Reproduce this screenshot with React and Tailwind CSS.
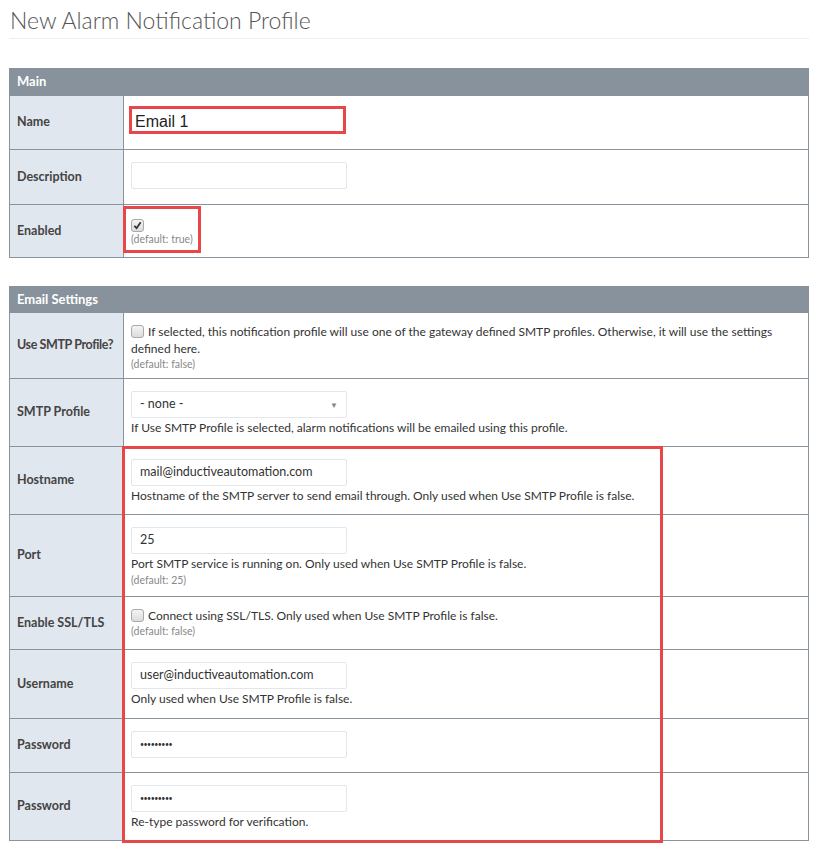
import React from "react";

const font = { fontFamily: "Lato, 'Open Sans', sans-serif" };

const Checkbox = ({ checked }) => (
  <span className="inline-flex items-center justify-center w-[13px] h-[13px] rounded-[3px] border border-[#a9a9a9] bg-gradient-to-b from-[#f4f4f4] to-[#dcdcdc] align-[-2px] mr-[4px]">
    {checked && (
      <svg width="9" height="9" viewBox="0 0 10 10">
        <path d="M1.5 5.5 L4 8 L8.5 1.5" fill="none" stroke="#333" strokeWidth="2" />
      </svg>
    )}
  </span>
);

const Field = ({ children, className = "" }) => (
  <div className={`w-[216px] h-[27px] border border-[#e3e6ea] rounded-[2px] bg-white flex items-center px-[8px] text-[12.5px] text-[#333] ${className}`}>
    {children}
  </div>
);

const Hint = ({ children }) => <div className="text-[12px] text-[#333] leading-[18px] mt-[1px]">{children}</div>;
const Def = ({ children }) => <div className="text-[10.5px] text-[#888] leading-[14px]">{children}</div>;

const Row = ({ label, h, tight, children }) => (
  <tr className={h}>
    <td
      className={`bg-[#e1e7ee] border border-[#8a949e] px-[7px] text-[12.5px] font-bold text-[#444] align-middle whitespace-nowrap ${
        tight ? "tracking-[-0.4px]" : ""
      }`}
    >
      {label}
    </td>
    <td className="border border-[#8a949e] bg-white px-[7px] pt-[12px] pb-[6px] align-top">{children}</td>
  </tr>
);

const Header = ({ title, h }) => (
  <tr className={h}>
    <td colSpan={2} className="bg-[#87929c] border border-[#87929c] px-[7px] text-[13px] font-bold text-white">
      {title}
    </td>
  </tr>
);

const Cols = () => (
  <colgroup>
    <col className="w-[114px]" />
    <col />
  </colgroup>
);

const Dots = () => <span className="text-[7px] tracking-[-0.5px] text-[#333]">•••••••••</span>;

export default function App() {
  return (
    <div className="relative bg-white w-[815px] h-[848px] px-[9px] pt-[4px]" style={font}>
      <h1 className="text-[23px] font-light text-[#555] leading-[32px] pl-[1px]">New Alarm Notification Profile</h1>
      <div className="h-px bg-[#eceef0] mt-[2px] w-[800px]" />

      <table className="w-[800px] table-fixed border-collapse mt-[29px]">
        <Cols />
        <tbody>
          <Header title="Main" h="h-[27px]" />
          <Row label="Name" h="h-[54px]">
            <div className="h-[27px] flex items-center pl-[4px] text-[16px] text-[#222]" style={{ fontFamily: "'Liberation Sans', Arial, sans-serif" }}>
              Email 1
            </div>
          </Row>
          <Row label="Description" h="h-[55px]">
            <Field />
          </Row>
          <Row label="Enabled" h="h-[53px]">
            <div className="-mt-[4px] leading-[18px]">
              <Checkbox checked />
            </div>
            <Def>(default: true)</Def>
          </Row>
        </tbody>
      </table>

      <table className="w-[800px] table-fixed border-collapse mt-[28px]">
        <Cols />
        <tbody>
          <Header title="Email Settings" h="h-[26px]" />
          <Row label="Use SMTP Profile?" h="h-[66px]" tight>
            <div className="text-[12px] text-[#333] leading-[17px] -mt-[2px]">
              <Checkbox />
              If selected, this notification profile will use one of the gateway defined SMTP profiles. Otherwise, it will use the settings
              <br />
              defined here.
            </div>
            <Def>(default: false)</Def>
          </Row>
          <Row label="SMTP Profile" h="h-[68px]">
            <Field className="justify-between">
              <span>- none -</span>
              <span className="text-[8px] text-[#888]">▼</span>
            </Field>
            <Hint>If Use SMTP Profile is selected, alarm notifications will be emailed using this profile.</Hint>
          </Row>
          <Row label="Hostname" h="h-[68px]">
            <Field>mail@inductiveautomation.com</Field>
            <Hint>Hostname of the SMTP server to send email through. Only used when Use SMTP Profile is false.</Hint>
          </Row>
          <Row label="Port" h="h-[82px]">
            <Field>25</Field>
            <Hint>Port SMTP service is running on. Only used when Use SMTP Profile is false.</Hint>
            <Def>(default: 25)</Def>
          </Row>
          <Row label="Enable SSL/TLS" h="h-[53px]">
            <div className="text-[12px] text-[#333] leading-[17px] -mt-[2px]">
              <Checkbox />
              Connect using SSL/TLS. Only used when Use SMTP Profile is false.
            </div>
            <Def>(default: false)</Def>
          </Row>
          <Row label="Username" h="h-[69px]">
            <Field>user@inductiveautomation.com</Field>
            <Hint>Only used when Use SMTP Profile is false.</Hint>
          </Row>
          <Row label="Password" h="h-[54px]">
            <Field>
              <Dots />
            </Field>
          </Row>
          <Row label="Password" h="h-[68px]">
            <Field>
              <Dots />
            </Field>
            <Hint>Re-type password for verification.</Hint>
          </Row>
        </tbody>
      </table>

      {/* red annotation boxes */}
      <div className="absolute left-[129px] top-[106px] w-[217px] h-[28px] border-[3px] border-[#e8474a]" />
      <div className="absolute left-[123px] top-[206px] w-[78px] h-[47px] border-[3px] border-[#e8474a]" />
      <div className="absolute left-[122px] top-[446px] w-[541px] h-[397px] border-[3px] border-[#e8474a]" />
    </div>
  );
}
